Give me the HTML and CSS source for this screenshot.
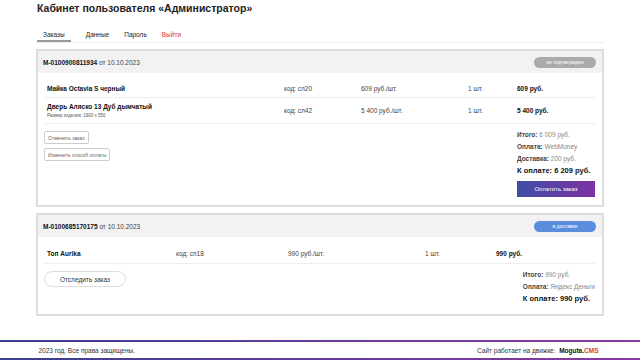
FILE: index.html
```html
<!DOCTYPE html>
<html lang="ru">
<head>
  <meta charset="UTF-8" />
  <title>Кабинет пользователя</title>
  <link rel="stylesheet" href="styles.css">
</head>
<body>
  <div class="wrap">
    <h1 class="title">Кабинет пользователя «Администратор»</h1>

    <div class="tabs">
      <a href="#" class="tab active">Заказы</a>
      <a href="#" class="tab">Данные</a>
      <a href="#" class="tab">Пароль</a>
      <a href="#" class="tab logout">Выйти</a>
    </div>

    <!-- заказ 1 -->
    <div class="order">
      <div class="order-head">
        <span><b>M-0100900811934</b> от 10.10.2023</span>
        <span class="status grey">не подтвержден</span>
      </div>
      <div class="items cols-a">
        <div class="row">
          <div class="name">Майка Octavia S черный</div>
          <div>код: сл20</div>
          <div>609 руб./шт.</div>
          <div>1 шт.</div>
          <div class="sum">609 руб.</div>
        </div>
        <div class="row">
          <div class="name">Дверь Аляско 13 Дуб дымчатый<small>Размер изделия: 1900 x 550</small></div>
          <div>код: сл42</div>
          <div>5 400 руб./шт.</div>
          <div>1 шт.</div>
          <div class="sum">5 400 руб.</div>
        </div>
      </div>
      <div class="order-foot">
        <div class="actions">
          <button class="btn-small">Отменить заказ</button>
          <button class="btn-small">Изменить способ оплаты</button>
        </div>
        <div class="summary">
          <p><b>Итого:</b> 6 009 руб.</p>
          <p><b>Оплата:</b> WebMoney</p>
          <p><b>Доставка:</b> 200 руб.</p>
          <p class="total">К оплате: 6 209 руб.</p>
          <button class="pay">Оплатить заказ</button>
        </div>
      </div>
    </div>

    <!-- заказ 2 -->
    <div class="order">
      <div class="order-head">
        <span><b>M-0100685170175</b> от 10.10.2023</span>
        <span class="status blue">в доставке</span>
      </div>
      <div class="items cols-b">
        <div class="row">
          <div class="name">Топ Aurika</div>
          <div>код: сп18</div>
          <div>990 руб./шт.</div>
          <div>1 шт.</div>
          <div class="sum">990 руб.</div>
        </div>
      </div>
      <div class="order-foot">
        <div class="actions">
          <button class="btn-track">Отследить заказ</button>
        </div>
        <div class="summary">
          <p><b>Итого:</b> 990 руб.</p>
          <p><b>Оплата:</b> Яндекс Деньги</p>
          <p class="total">К оплате: 990 руб.</p>
        </div>
      </div>
    </div>
  </div>

  <div class="footer">
    <div class="footer-in">
      <span>2023 год. Все права защищены.</span>
      <span>Сайт работает на движке: &nbsp;<b>Moguta.<em>CMS</em></b></span>
    </div>
  </div>
</body>
</html>
```

FILE: styles.css
```css
body { margin: 0; font-family: "Liberation Sans", Arial, sans-serif; color: #222; background: white; }
.wrap { width: 568px; margin: 0 auto; padding-top: 1px; height: 339px; }
.title { font-size: 10.5px; margin: 0; padding: 0 1px; line-height: 14px; }

.tabs { display: flex; gap: 15px; margin-top: 13px; border-bottom: 1px solid #eee; padding-left: 1px; }
.tab { font-size: 6.5px; color: #222; text-decoration: none; padding: 3px 0 4px; }
.tab.active { border-bottom: 2px solid #999; padding: 3px 6px 2px; }
.tab.logout { color: #d33; }

.order { border: 2px solid #ddd; margin-top: 6px; }
.order-head {
  background: #f2f2f2; height: 22px; display: flex; align-items: center;
  justify-content: space-between; padding: 0 6px 0 5px; font-size: 6.5px; color: #444;
}
.order-head b { color: #111; }
.status { color: white; border-radius: 6px; width: 62px; height: 11px; line-height: 11px; text-align: center; font-size: 5px; }
.status.grey { background: #aaa; }
.status.blue { background: #5b8ddf; }

.items { padding: 6px 7px 0 6px; }
.row {
  display: grid; align-items: center; min-height: 18px; padding: 0 4px 0 3px;
  border-bottom: 1px solid #eee; font-size: 6.5px; color: #444;
}
.cols-a .row { grid-template-columns: 237px 77px 107px 49px 1fr; }
.cols-a .row:nth-child(2) { min-height: 25px; }
.cols-b .row { grid-template-columns: 129px 112px 137px 71px 1fr; min-height: 20px; }
.row .name, .row .sum { font-weight: bold; color: #111; }
.row small { display: block; font-weight: normal; font-size: 4.5px; color: #555; margin-top: 3px; }

.order-foot { display: flex; justify-content: space-between; padding: 7px 7px 8px 6px; }
.actions { display: flex; flex-direction: column; align-items: flex-start; gap: 4px; }
.btn-small {
  font-family: inherit; font-size: 5px; color: #666; background: white;
  border: 1px solid #ccc; border-radius: 2px; height: 13px; padding: 0 3px;
}
.btn-track {
  font-family: inherit; font-size: 6.5px; color: #333; background: white;
  border: 1px solid #ddd; border-radius: 8px; width: 82px; height: 16px;
}
.summary { margin-top: -2px; }
.summary p { margin: 0; font-size: 6.5px; color: #888; line-height: 12px; }
.summary b { color: #444; }
.summary .total { font-size: 7.5px; font-weight: bold; color: #111; line-height: 12px; }
.pay {
  margin-top: 4px; width: 78px; height: 16px; border: none; color: white;
  font-family: inherit; font-size: 6px; display: block;
  background: linear-gradient(90deg, #3f4ea3, #7e31a3);
}
.cols-b + .order-foot { padding-bottom: 9px; }

.footer { border-top: 2px solid #6a3f9a; border-image: linear-gradient(90deg, #3a3f8c, #8a3a9f) 1; border-bottom: 2px solid #bbb; }
.footer-in {
  width: 560px; margin: 0 auto; padding: 0 3px 0 0; height: 16px; display: flex; align-items: center;
  justify-content: space-between; font-size: 6.5px; color: #333;
}
.footer b { color: #111; }
.footer em { font-style: normal; color: #e03a2c; }
```
